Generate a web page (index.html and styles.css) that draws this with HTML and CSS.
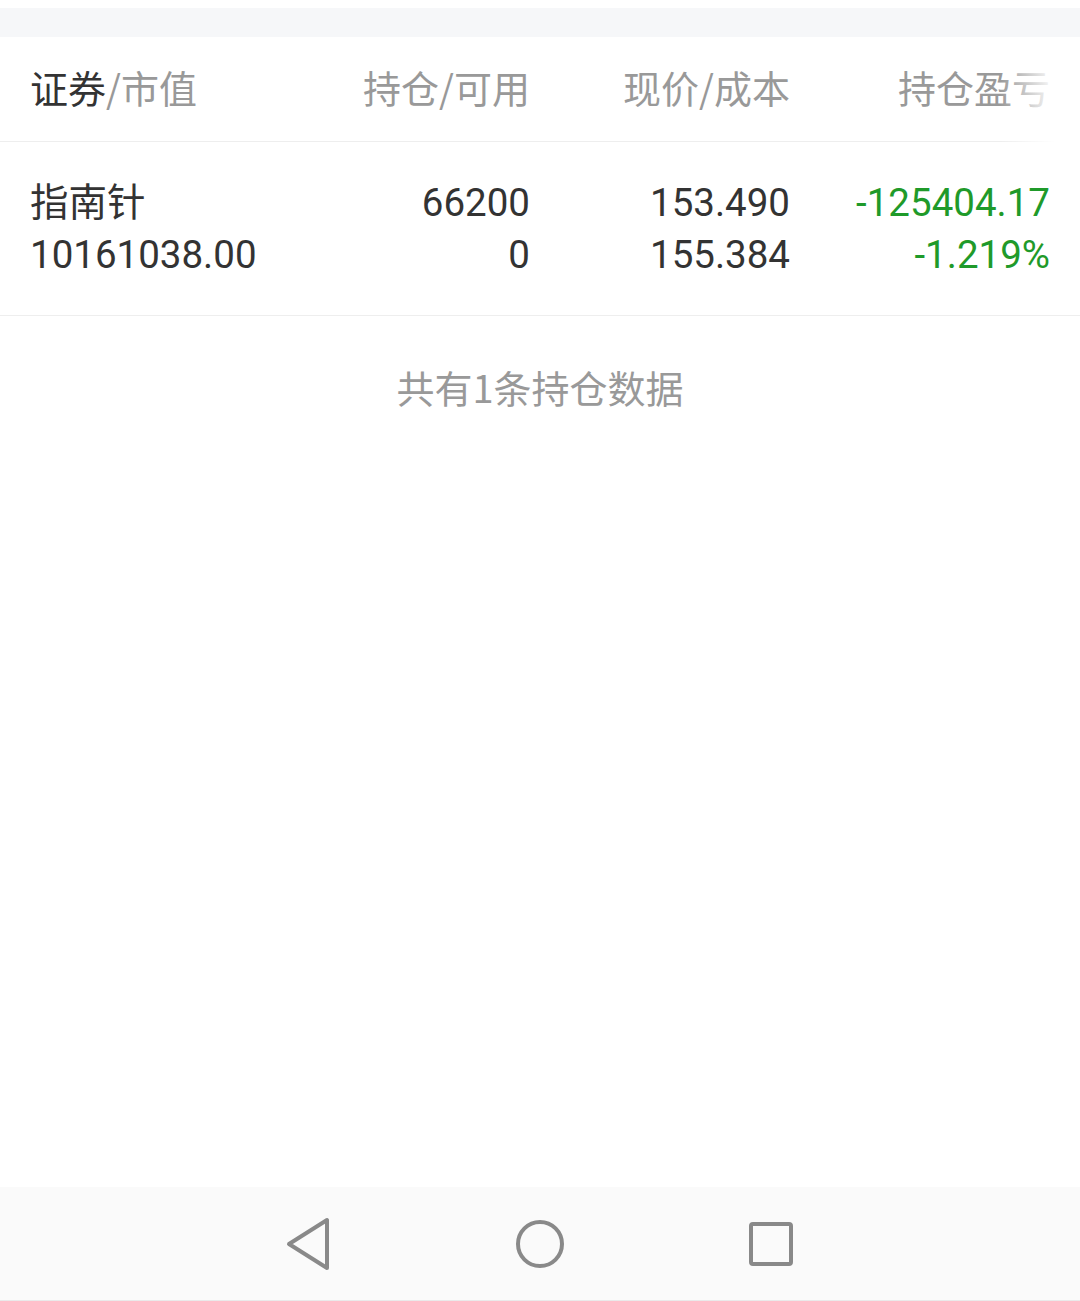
FILE: index.html
```html
<!DOCTYPE html>
<html>
<head>
<meta charset="utf-8">
<link rel="stylesheet" href="styles.css">
</head>
<body>
<div class="page">
	<div class="top-band"></div>

	<!--header-->
	<div class="table-head">
		<div class="cell left"><span class="strong">证券</span>/市值</div>
		<div class="cell">持仓/可用</div>
		<div class="cell">现价/成本</div>
		<div class="cell">持仓盈亏</div>
	</div>

	<!--holding row-->
	<div class="table-row">
		<div class="cell left">指南针<br>10161038.00</div>
		<div class="cell">66200<br>0</div>
		<div class="cell">153.490<br>155.384</div>
		<div class="cell down">-125404.17<br>-1.219%</div>
	</div>

	<p class="summary">共有1条持仓数据</p>
</div>

<!--nav bar-->
<div class="nav-bar">
	<div class="nav-btn">
		<svg width="50" height="54" viewBox="0 0 50 54"><path d="M43 3 L43 51 L5 27 Z" fill="none" stroke="#898989" stroke-width="4" stroke-linejoin="round"/></svg>
	</div>
	<div class="nav-btn">
		<svg width="50" height="50" viewBox="0 0 50 50"><circle cx="25" cy="25" r="22" fill="none" stroke="#898989" stroke-width="4"/></svg>
	</div>
	<div class="nav-btn">
		<svg width="46" height="46" viewBox="0 0 46 46"><rect x="3" y="3" width="40" height="40" rx="2" fill="none" stroke="#898989" stroke-width="4"/></svg>
	</div>
</div>
</body>
</html>
```

FILE: styles.css
```css
html, body {
	margin: 0;
	padding: 0;
	background-color: #ffffff;
}
body {
	display: flex;
	flex-direction: column;
	min-height: 1301px;
	font-family: Roboto, "Noto Sans CJK SC", sans-serif;
	color: #333333;
}
.page {
	flex: 1;
	padding-top: 8px;
}
.top-band {
	height: 29px;
	background-color: #f6f7f9;
}

.table-head, .table-row {
	display: grid;
	grid-template-columns: 240px 260px 260px 260px;
	padding: 0 30px;
	border-bottom: 1px solid #eeeeee;
}
.table-head {
	position: relative;
	height: 104px;
	align-items: center;
	font-family: "Noto Sans CJK SC", sans-serif;
	font-size: 38px;
	line-height: 44px;
	color: #999999;
}
.table-head .cell {
	margin-bottom: 4px;
}
.table-head::after {
	content: "";
	position: absolute;
	top: 0;
	right: 0;
	width: 80px;
	height: 105px;
	background: linear-gradient(to right, rgba(255,255,255,0), #ffffff 70%);
}
.table-head .strong {
	color: #333333;
}
.table-row {
	padding-top: 35px;
	padding-bottom: 34px;
	font-size: 38.5px;
	line-height: 52px;
}
.cell {
	text-align: right;
	white-space: nowrap;
}
.cell.left {
	text-align: left;
}
.down {
	color: #1f9a2a;
}

.summary {
	margin: 50px 0 0;
	text-align: center;
	font-family: "Noto Sans CJK SC", sans-serif;
	font-size: 38px;
	line-height: 42px;
	color: #999999;
}

.nav-bar {
	display: grid;
	grid-template-columns: 231px 231px 231px;
	justify-content: center;
	align-items: center;
	height: 113px;
	background-color: #fafafa;
	border-bottom: 1px solid #eaeaea;
}
.nav-btn {
	display: flex;
	justify-content: center;
	align-items: center;
}
.nav-btn svg {
	display: block;
}
```
